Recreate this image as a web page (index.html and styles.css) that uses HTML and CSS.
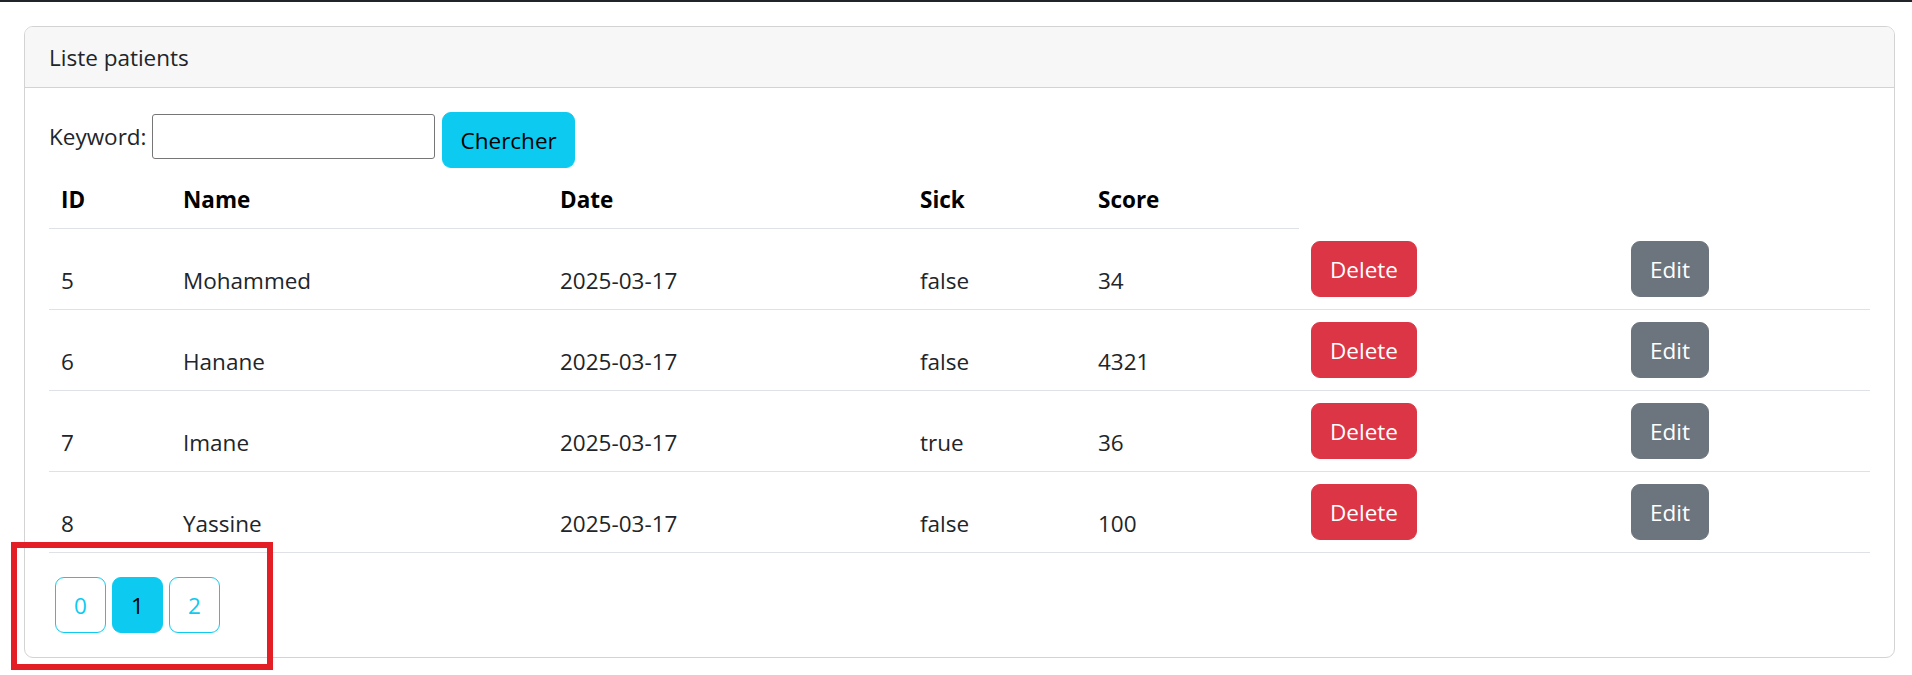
FILE: index.html
```html
<!DOCTYPE html>
<html lang="fr">
<head>
<meta charset="utf-8">
<title>Liste patients</title>
<link rel="stylesheet" href="styles.css">
</head>
<body>
<div class="topbar"></div>
<div class="page">
  <div class="card">
    <div class="card-header">Liste patients</div>
    <div class="card-body">
      <form class="search">
        <label class="search-label">Keyword:</label>
        <input class="search-input" type="text">
        <button class="btn btn-info search-btn" type="button">Chercher</button>
      </form>
      <table class="table">
        <colgroup>
          <col class="c-id"><col class="c-name"><col class="c-date"><col class="c-sick"><col class="c-score"><col class="c-del"><col class="c-edit">
        </colgroup>
        <thead>
          <tr><th>ID</th><th>Name</th><th>Date</th><th>Sick</th><th>Score</th></tr>
        </thead>
        <tbody>
          <tr><td>5</td><td>Mohammed</td><td>2025-03-17</td><td>false</td><td>34</td><td class="act"><a class="btn btn-danger">Delete</a></td><td class="act"><a class="btn btn-secondary">Edit</a></td></tr>
          <tr><td>6</td><td>Hanane</td><td>2025-03-17</td><td>false</td><td>4321</td><td class="act"><a class="btn btn-danger">Delete</a></td><td class="act"><a class="btn btn-secondary">Edit</a></td></tr>
          <tr><td>7</td><td>Imane</td><td>2025-03-17</td><td>true</td><td>36</td><td class="act"><a class="btn btn-danger">Delete</a></td><td class="act"><a class="btn btn-secondary">Edit</a></td></tr>
          <tr><td>8</td><td>Yassine</td><td>2025-03-17</td><td>false</td><td>100</td><td class="act"><a class="btn btn-danger">Delete</a></td><td class="act"><a class="btn btn-secondary">Edit</a></td></tr>
        </tbody>
      </table>
      <ul class="pages">
        <li><a class="btn btn-outline-info">0</a></li>
        <li><a class="btn btn-info">1</a></li>
        <li><a class="btn btn-outline-info">2</a></li>
      </ul>
    </div>
  </div>
</div>
<div class="highlight"></div>
</body>
</html>
```
FILE: styles.css
```css
* { box-sizing: border-box; }
html, body { margin: 0; padding: 0; background: #fff; }
body {
  position: relative;
  min-height: 100vh;
  font-family: "Open Sans", "Liberation Sans", sans-serif;
  font-size: 22.5px;
  line-height: 36px;
  color: #212529;
}
.topbar { height: 2px; background: #212529; }
.page { padding: 24px 0 0 24px; }
.card {
  width: 1871px;
  border: 1px solid #d3d3d3;
  border-radius: 9px;
  background: #fff;
  overflow: hidden;
}
.card-header {
  background: #f7f7f7;
  padding: 13px 24px 11px;
  border-bottom: 1px solid #d3d3d3;
}
.card-body { padding: 24px; }

.search { display: flex; align-items: flex-start; margin: 0; }
.search-label { margin-top: 7px; }
.search-input {
  width: 283px; height: 45px;
  margin: 2px 0 0 5px;
  border: 1px solid #767676;
  border-radius: 3px;
  font: 20px "Liberation Sans", sans-serif;
  padding: 1px 3px;
}
.search-btn { margin-left: 7px; width: 133px; }

.btn {
  display: inline-block;
  height: 56px;
  padding: 10px 18px 8px;
  border: 1px solid transparent;
  border-radius: 9px;
  font-family: inherit;
  font-size: 22.5px;
  line-height: 36px;
  text-align: center;
  cursor: pointer;
}
.btn-info { background: #0dcaf0; border-color: #0dcaf0; color: #000; }
.btn-outline-info { background: #fff; border-color: #0dcaf0; color: #0dcaf0; }
.btn-danger { background: #dc3545; border-color: #dc3545; color: #fff; width: 106px; }
.btn-secondary { background: #6c757d; border-color: #6c757d; color: #fff; width: 78px; }

.table {
  width: 100%;
  table-layout: fixed;
  border-collapse: collapse;
  margin-bottom: 24px;
}
.c-id { width: 122px; }
.c-name { width: 377px; }
.c-date { width: 360px; }
.c-sick { width: 178px; }
.c-score { width: 213px; }
.c-del { width: 320px; }
.table th, .table td {
  padding: 12px;
  text-align: left;
  border-bottom: 1px solid #dee2e6;
}
.table th { font-weight: 700; color: #000; vertical-align: middle; padding: 14px 12px 10px; }
.table td { vertical-align: bottom; padding-bottom: 10px; }
.table td.act { vertical-align: middle; padding: 12px; }

.pages { list-style: none; margin: 0; padding: 0; display: flex; }
.pages li { margin-left: 6px; }
.pages .btn { width: 51px; padding: 10px 0 8px; }

.highlight {
  position: absolute;
  left: 11px; top: 542px;
  width: 262px; height: 128px;
  border: 6px solid #e31e24;
  pointer-events: none;
}
```
